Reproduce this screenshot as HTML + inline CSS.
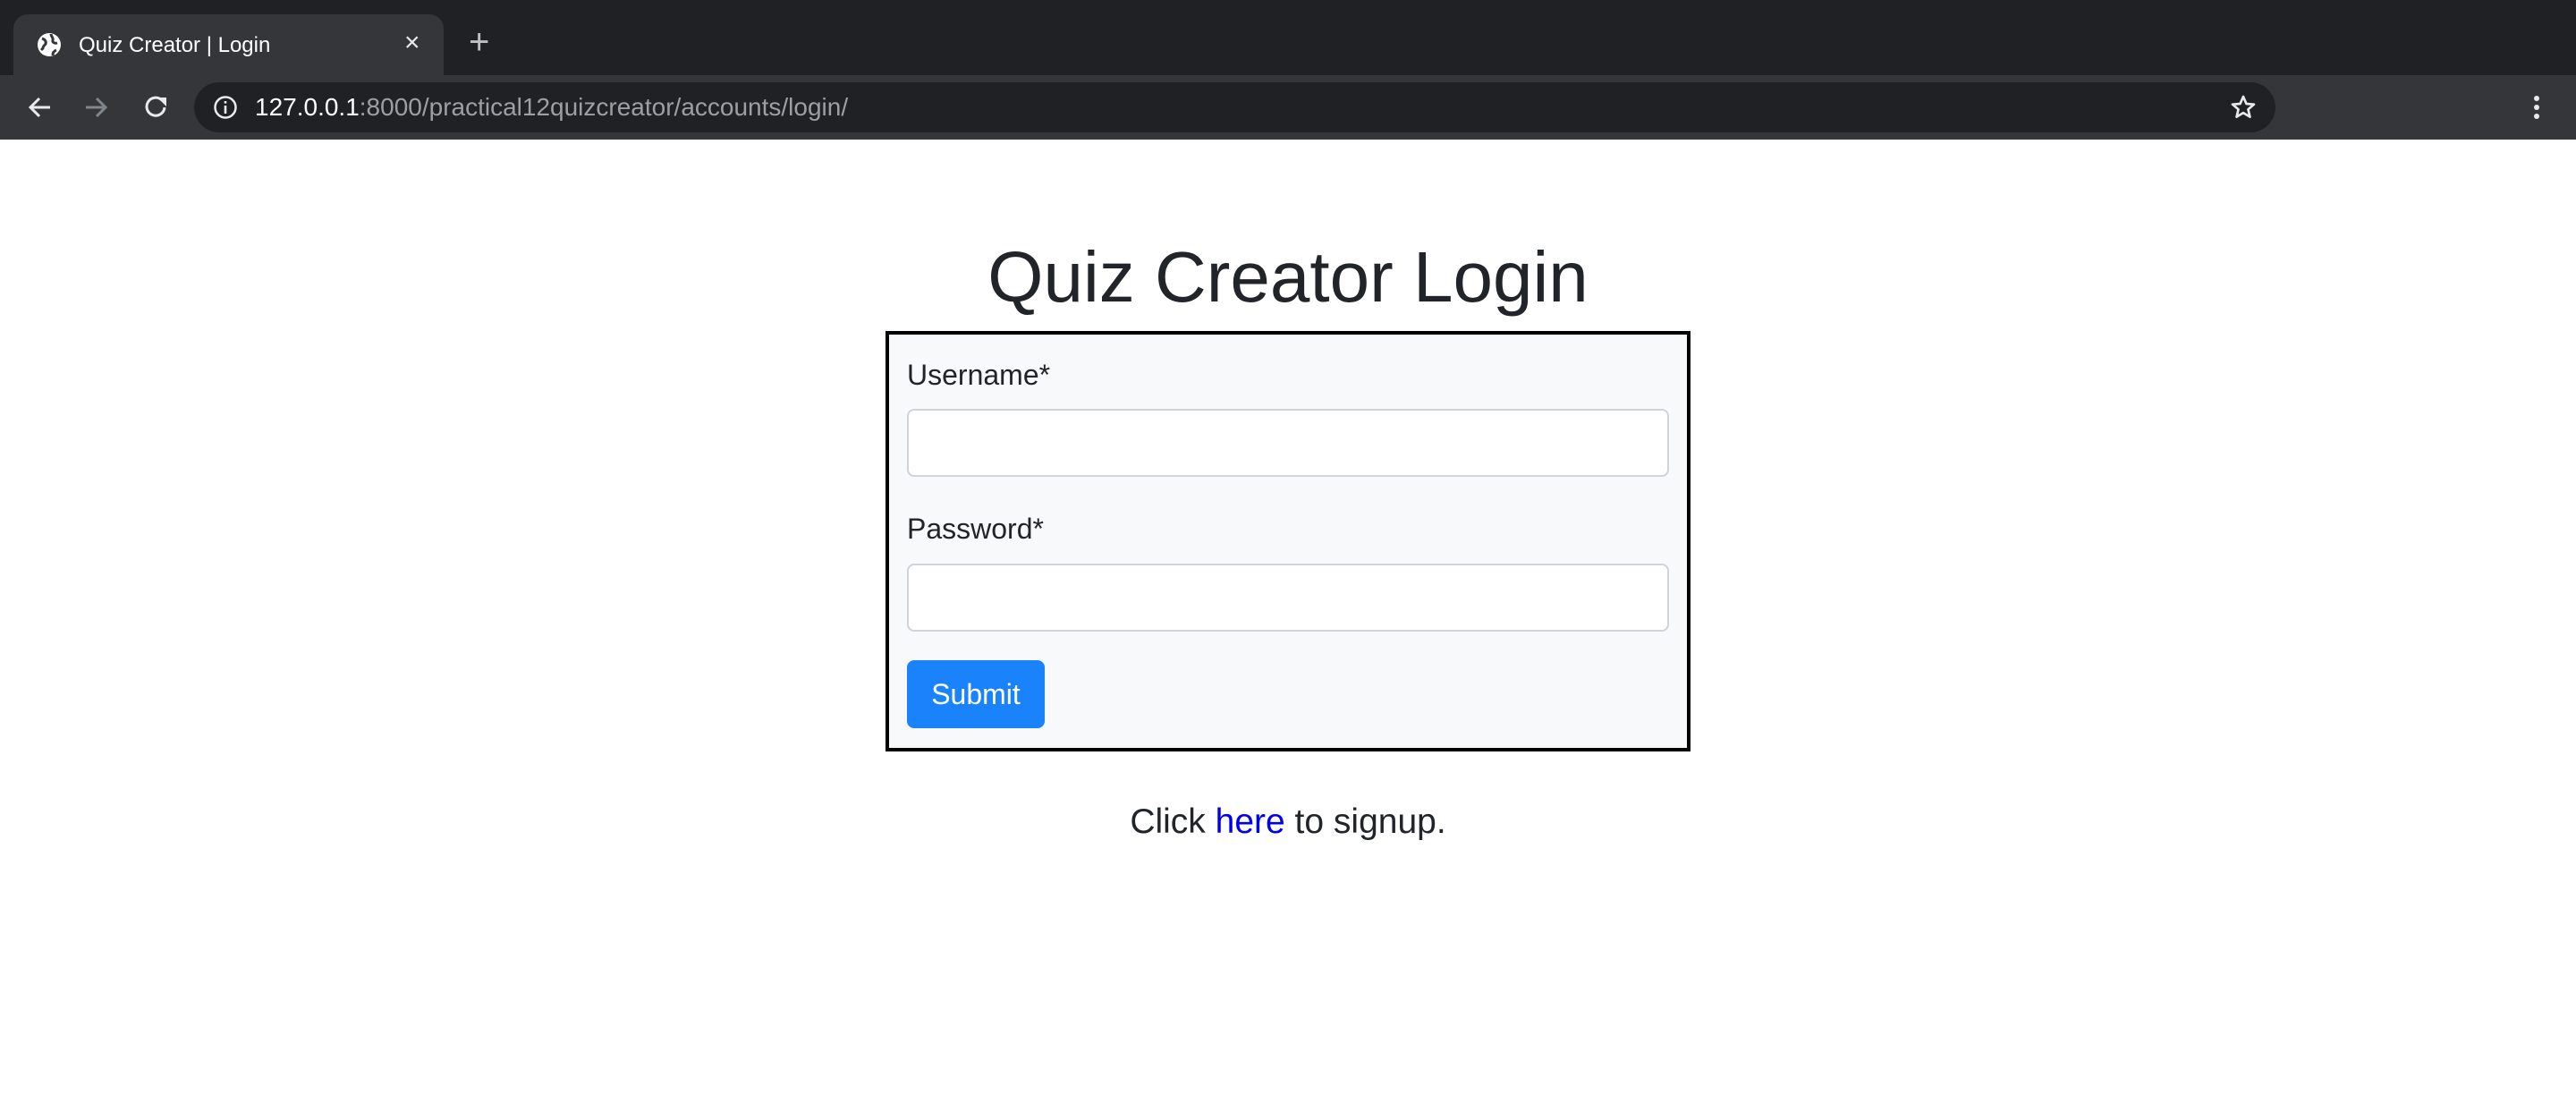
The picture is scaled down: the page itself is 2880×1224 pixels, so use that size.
<!DOCTYPE html>
<html><head><meta charset="utf-8"><style>
*{margin:0;padding:0;box-sizing:border-box}
body{width:2880px;height:1224px;background:#fff;font-family:"Liberation Sans",sans-serif;position:relative;overflow:hidden}
.abs{position:absolute}
#tabs{left:0;top:0;width:2880px;height:84px;background:#202124}
#tab{left:15px;top:16px;width:481px;height:68px;background:#35363a;border-radius:16px 16px 0 0}
#tb{left:0;top:84px;width:2880px;height:72px;background:#35363a}
#omni{left:217px;top:92px;width:2327px;height:56px;background:#202124;border-radius:28px}
.t{color:#fff;white-space:nowrap}
h1{position:absolute;left:0;width:2880px;text-align:center;top:262px;font-size:80px;font-weight:500;color:#212529;line-height:96px}
#box{left:990px;top:370px;width:900px;height:470px;border:4px solid #000;background:#f8f9fa}
.lbl{font-size:32px;color:#212529;left:1014px}
.inp{left:1014px;width:852px;height:76px;background:#fff;border:2px solid #ced4da;border-radius:8px}
#btn{left:1014px;top:738px;width:154px;height:76px;background:#1a82fb;border-radius:8px;color:#fff;font-size:32px;line-height:76px;text-align:center}
#click{left:0;width:2880px;text-align:center;top:897px;font-size:39px;color:#212529}
#click span{color:#0000ee}
</style></head><body>
<div id="tabs" class="abs"></div>
<div id="tab" class="abs"></div>
<svg class="abs" style="left:41px;top:36px" width="28" height="28" viewBox="0 0 28 28"><circle cx="14" cy="14" r="13" fill="#fff"/><path d="M6 7c3 1 5 3 4 6-1 2-3 2-3 5l-2 2M16 2c0 3 3 4 2 7-1 2 2 4 5 3M18 26c0-3 1-5 4-6" stroke="#35363a" stroke-width="3" fill="none"/></svg>
<div class="abs t" style="left:88px;top:37px;font-size:24px">Quiz Creator | Login</div>
<div class="abs t" style="left:452px;top:31px;font-size:30px;color:#e8eaed">×</div>
<div class="abs t" style="left:524px;top:25px;font-size:40px;color:#bdc1c6">+</div>
<div id="tb" class="abs"></div>
<svg class="abs" style="left:30px;top:106px" width="240" height="28" viewBox="0 0 240 28"><path d="M26 14H4M14 4L4 14l10 10" stroke="#e8eaed" stroke-width="3" fill="none"/><path d="M66 14h22M78 4l10 10-10 10" stroke="#80868b" stroke-width="3" fill="none"/><path d="M151 6a10 10 0 1 0 3 8" stroke="#e8eaed" stroke-width="3" fill="none"/><path d="M146 3h10v10z" fill="#e8eaed"/></svg>
<div id="omni" class="abs"></div>
<svg class="abs" style="left:238px;top:106px" width="28" height="28" viewBox="0 0 28 28"><circle cx="14" cy="14" r="11.5" stroke="#e8eaed" stroke-width="2.5" fill="none"/><rect x="12.7" y="12" width="2.6" height="9" fill="#e8eaed"/><rect x="12.7" y="7" width="2.6" height="2.6" fill="#e8eaed"/></svg>
<div class="abs t" style="left:285px;top:104px;font-size:28px">127.0.0.1<span style="color:#9aa0a6">:8000/practical12quizcreator/accounts/login/</span></div>
<svg class="abs" style="left:2492px;top:104px" width="32" height="32" viewBox="0 0 24 24"><path d="M12 3l2.6 6 6.4.5-4.9 4.2 1.5 6.3L12 16.6 6.4 20l1.5-6.3L3 9.5 9.4 9z" stroke="#e8eaed" stroke-width="2" fill="none" stroke-linejoin="round"/></svg>
<svg class="abs" style="left:2830px;top:104px" width="12" height="32"><circle cx="6" cy="6" r="3" fill="#e8eaed"/><circle cx="6" cy="16" r="3" fill="#e8eaed"/><circle cx="6" cy="26" r="3" fill="#e8eaed"/></svg>
<h1>Quiz Creator Login</h1>
<div id="box" class="abs"></div>
<div class="abs lbl" style="top:401px">Username*</div>
<div class="abs inp" style="top:457px"></div>
<div class="abs lbl" style="top:573px">Password*</div>
<div class="abs inp" style="top:630px"></div>
<div id="btn" class="abs">Submit</div>
<div id="click" class="abs">Click <span>here</span> to signup.</div>
</body></html>
